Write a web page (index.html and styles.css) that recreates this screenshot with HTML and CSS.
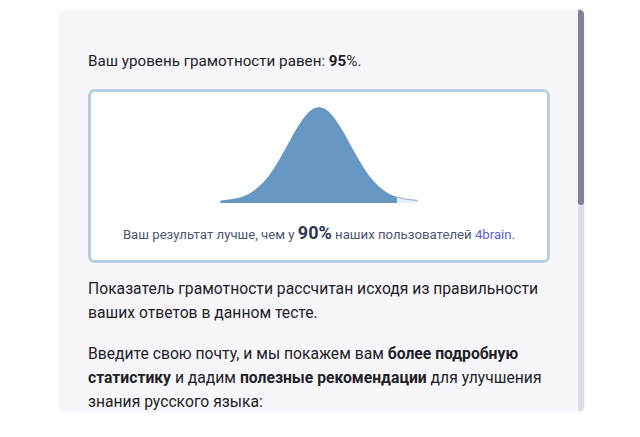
FILE: index.html
```html
<!DOCTYPE html>
<html lang="ru">
<head>
<meta charset="utf-8">
<title>Результат теста</title>
<link rel="stylesheet" href="styles.css">
</head>
<body>
<div class="page">
  <section class="result-card">
    <div class="result-body">
      <p class="score">Ваш уровень грамотности равен: <b>95</b>%.</p>

      <div class="chart-box">
        <svg class="bell" width="200" height="100" viewBox="0 0 200 100" aria-hidden="true">
          <path class="bell-main" d="M1.4 100 L1.4 97.4 L5 97.14 L10 96.61 L15 95.81 L20 94.63 L25 92.96 L30 90.66 L35 87.57 L40 83.55 L45 78.52 L50 72.39 L55 65.22 L60 57.11 L65 48.3 L70 39.15 L75 30.1 L80 21.66 L85 14.39 L90 8.76 L95 5.22 L100 4 L105 5.22 L110 8.76 L115 14.39 L120 21.66 L125 30.1 L130 39.15 L135 48.3 L140 57.11 L145 65.22 L150 72.39 L155 78.52 L160 83.55 L165 87.57 L170 90.66 L175 92.96 L178 94.03 L178 100 Z"/>
          <path class="bell-tail" d="M178 100 L178 94.03 L180 94.63 L185 95.81 L190 96.61 L195 97.14 L198.6 97.4 L198.6 100 Z"/>
          <path class="bell-tail-line" d="M178 94.03 L180 94.63 L185 95.81 L190 96.61 L195 97.14 L198.6 97.4"/>
        </svg>
        <p class="chart-caption">Ваш результат лучше, чем у <span class="pct">90%</span> наших пользователей <a class="brand" href="#">4brain</a>.</p>
      </div>

      <p class="text">Показатель грамотности рассчитан исходя из правильности ваших ответов в данном тесте.</p>

      <p class="text">Введите свою почту, и мы покажем вам <b>более подробную статистику</b> и дадим <b>полезные рекомендации</b> для улучшения знания русского языка:</p>

      <form class="mail-form">
        <input class="mail-input" type="email" placeholder="Ваш e-mail">
        <button class="mail-button" type="button">Получить результаты</button>
      </form>

      <p class="note">Нажимая на кнопку, вы соглашаетесь с политикой конфиденциальности и условиями использования сервиса.</p>
    </div>
    <div class="scroll-track" aria-hidden="true">
      <div class="scroll-thumb"></div>
    </div>
  </section>
</div>
</body>
</html>
```

FILE: styles.css
```css
html, body {
  margin: 0;
  padding: 0;
  background: #ffffff;
}

body {
  font-family: Roboto, "Noto Sans", sans-serif;
  color: #1f2126;
}

.page {
  padding: 9px 0 0 59px;
}

.result-card {
  position: relative;
  width: 526px;
  height: 403px;
  overflow: hidden;
  background: #f7f7fb;
  border-radius: 8px;
  box-shadow: 0 1px 2px rgba(40, 40, 80, 0.06);
}

.scroll-track {
  position: absolute;
  top: 0;
  right: 1px;
  bottom: 0;
  width: 6px;
  background: #dcdce6;
  border-radius: 3px;
}

.scroll-thumb {
  height: 196px;
  background: #7f8399;
  border-radius: 3px;
}

.result-body {
  padding: 40px 35px 40px 29px;
}

.score {
  margin: 0 0 16px;
  font-size: 15.2px;
  line-height: 24px;
}

.score b {
  font-weight: 700;
}

.chart-box {
  background: #ffffff;
  border: 3px solid #b9cde1;
  border-radius: 7px;
  padding: 11px 0 13px;
  display: flex;
  flex-direction: column;
  align-items: center;
}

.bell {
  display: block;
}

.bell-main {
  fill: #6698c3;
}

.bell-tail {
  fill: #e6eef7;
}

.bell-tail-line {
  fill: none;
  stroke: #8fa9c2;
  stroke-width: 1;
}

.chart-caption {
  margin: 20px 0 0;
  font-size: 13.2px;
  line-height: 24px;
  color: #4c5572;
}

.pct {
  font-size: 18px;
  font-weight: 700;
  color: #2f3852;
  line-height: 1;
}

.brand {
  color: #5a60d8;
  text-decoration: none;
}

.text {
  margin: 17px 0 0;
  font-size: 15.7px;
  line-height: 24px;
}

.chart-box + .text {
  margin-top: 14px;
}

.text b {
  font-weight: 700;
}

.mail-form {
  display: flex;
  flex-direction: column;
  gap: 12px;
  margin-top: 20px;
}

.mail-input {
  height: 44px;
  padding: 0 14px;
  border: 1px solid #c9cfdc;
  border-radius: 6px;
  font: 16px Roboto, sans-serif;
  background: #fff;
}

.mail-button {
  height: 48px;
  border: 0;
  border-radius: 6px;
  background: #5a60d8;
  color: #fff;
  font: 500 16px Roboto, sans-serif;
}

.note {
  margin: 14px 0 0;
  font-size: 12px;
  line-height: 18px;
  color: #7a8096;
}
```
